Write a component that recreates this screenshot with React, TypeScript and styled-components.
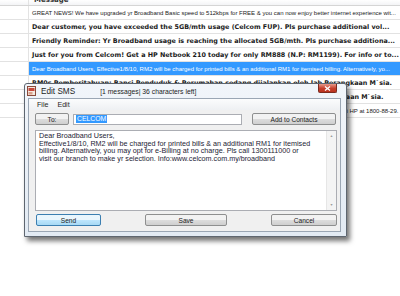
import React from "react";
import styled, { createGlobalStyle } from "styled-components";

const Global = createGlobalStyle`
  html, body {
    margin: 0;
    padding: 0;
    background: #ffffff;
    overflow: hidden;
  }
`;

type Msg = { text: string; bold?: boolean; selected?: boolean };

const messages: Msg[] = [
  {
    text: "GREAT NEWS! We have upgraded yr Broadband Basic speed to 512kbps for FREE & you can now enjoy better internet experience wit...",
  },
  {
    text: "Dear customer, you have exceeded the 5GB/mth usage (Celcom FUP). Pls purchase additional vol...",
    bold: true,
  },
  {
    text: "Friendly Reminder: Yr Broadband usage is reaching the allocated 5GB/mth. Pls purchase additiona...",
    bold: true,
  },
  {
    text: "Just for you from Celcom! Get a HP Netbook 210 today for only RM888 (N.P: RM1199). For info or to...",
    bold: true,
  },
  {
    text: "Dear Broadband Users,  Effective1/8/10, RM2 will be charged for printed bills & an additional RM1 for itemised billing. Alternatively, yo...",
    selected: true,
  },
  {
    text: "RM0s Pemberitahuan: Banci Penduduk & Perumahan sedang dijalankan oleh Jab Perangkaan M`sia.",
    bold: true,
  },
  {
    text: "RM0s Pemberitahuan: Banci Penduduk & Perumahan 2010 dijalankan oleh Jab Perangkaan M`sia.",
    bold: true,
  },
  {
    text: "Celcom: Nikmati tawaran istimewa Broadband Basic & Netbook pada harga menarik sekarang. Untuk info, sila hubungi HP at 1800-88-29.",
  },
];

export default function App() {
  return (
    <>
      <Global />
      <Screen>
        <List>
          <Header>
            <HeadCell />
            <HeadLabel>Message</HeadLabel>
          </Header>
          {messages.map((m, i) => (
            <Row key={i}>
              <Lead />
              <Cell $bold={m.bold} $selected={m.selected}>
                {m.text}
              </Cell>
            </Row>
          ))}
        </List>

        <Dialog>
          <TitleBar>
            <AppIcon width="9" height="10" viewBox="0 0 9 10">
              <rect x="0.5" y="0.5" width="8" height="9" fill="#f4e9e0" stroke="#8a4a3a" />
              <rect x="1.5" y="2" width="6" height="3" fill="#c8473a" />
              <rect x="1.5" y="6" width="4" height="2.5" fill="#d9a08a" />
            </AppIcon>
            <Title>Edit SMS</Title>
            <Counter>[1 messages| 36 characters left]</Counter>
            <CloseButton>
              <svg width="7" height="5" viewBox="0 0 7 5">
                <path d="M1 0.5 L6 4.5 M6 0.5 L1 4.5" stroke="#fff" strokeWidth="1.3" />
              </svg>
            </CloseButton>
          </TitleBar>
          <Client>
            <MenuBar>
              <MenuItem>File</MenuItem>
              <MenuItem>Edit</MenuItem>
            </MenuBar>
            <Body>
              <ToolRow>
                <Button $w={34}>To:</Button>
                <Recipient>
                  <Picked>CELCOM</Picked>
                </Recipient>
                <Button $w={84}>Add to Contacts</Button>
              </ToolRow>
              <TextBox>
                <TextContent>
                  Dear Broadband Users,
                  <br />
                  Effective1/8/10, RM2 will be charged for printed bills &amp; an additional RM1 for itemised
                  <br />
                  billing. Alternatively, you may opt for e-Billing at no charge. Pls call 1300111000 or
                  <br />
                  visit our branch to make yr selection. Info:www.celcom.com.my/broadband
                </TextContent>
                <ScrollTrack>
                  <Arrow>▲</Arrow>
                  <Arrow>▼</Arrow>
                </ScrollTrack>
              </TextBox>
              <ActionRow>
                <Button $w={65} $focus>
                  Send
                </Button>
                <Button $w={82}>Save</Button>
                <Button $w={66}>Cancel</Button>
              </ActionRow>
            </Body>
          </Client>
        </Dialog>
      </Screen>
    </>
  );
}

const Screen = styled.div`
  position: relative;
  width: 400px;
  height: 296px;
  overflow: hidden;
  background: #ffffff;
`;

const List = styled.div`
  display: flex;
  flex-direction: column;
`;

const Header = styled.div`
  display: flex;
  height: 5px;
  overflow: hidden;
  background: linear-gradient(#ffffff, #f3f4f6);
  border-bottom: 1px solid #d5d5d5;
`;

const HeadCell = styled.div`
  width: 28px;
  flex: none;
  border-right: 1px solid #e3e3e3;
`;

const HeadLabel = styled.div`
  margin-top: -4px;
  padding-left: 5px;
  font: bold 7px/8px "DejaVu Sans", sans-serif;
  color: #333;
`;

const Row = styled.div`
  display: flex;
  height: 13px;
  border-bottom: 1px solid #e2e2e2;
`;

const Lead = styled.div`
  width: 28px;
  flex: none;
`;

const Cell = styled.div<{ $bold?: boolean; $selected?: boolean }>`
  flex: 1;
  min-width: 0;
  display: flex;
  align-items: center;
  padding-left: 3px;
  white-space: nowrap;
  overflow: hidden;
  border-left: 1px solid #e3e3e3;
  font-family: ${(p) => (p.$bold ? '"DejaVu Sans"' : '"Liberation Sans"')}, sans-serif;
  font-size: ${(p) => (p.$bold ? "6.4px" : "6px")};
  font-weight: ${(p) => (p.$bold ? 700 : 400)};
  color: ${(p) => (p.$selected ? "#ffffff" : "#1a1a1a")};
  background: ${(p) => (p.$selected ? "#3399ff" : "transparent")};
`;

const Dialog = styled.div`
  position: absolute;
  left: 24px;
  top: 83px;
  width: 323px;
  height: 154px;
  box-sizing: border-box;
  display: flex;
  flex-direction: column;
  background: linear-gradient(#f1f5fa, #e2eaf3);
  border: 1px solid #5e6670;
  border-radius: 3px 3px 0 0;
  box-shadow: 3px 4px 5px rgba(0, 0, 0, 0.55);
  font-family: "Liberation Sans", sans-serif;
  color: #1e1e1e;
`;

const TitleBar = styled.div`
  position: relative;
  height: 14px;
  flex: none;
  display: flex;
  align-items: center;
  padding-left: 2px;
`;

const AppIcon = styled.svg`
  flex: none;
`;

const Title = styled.span`
  margin-left: 5px;
  font-size: 8.2px;
`;

const Counter = styled.span`
  margin-left: 25px;
  font-size: 6.8px;
`;

const CloseButton = styled.div`
  position: absolute;
  right: 9px;
  top: 0;
  width: 17px;
  height: 8px;
  display: flex;
  align-items: center;
  justify-content: center;
  background: linear-gradient(#e89a8a, #c7402c 55%, #b8321f);
  border: 1px solid #7a2a1e;
  border-top: none;
  border-radius: 0 0 2px 2px;
`;

const Client = styled.div`
  flex: 1;
  display: flex;
  flex-direction: column;
  margin: 0 5px 4px 3px;
  background: #f0f0f0;
  border: 1px solid #9aa6b4;
`;

const MenuBar = styled.div`
  height: 11px;
  flex: none;
  display: flex;
  align-items: center;
  gap: 9px;
  padding-left: 8px;
  background: linear-gradient(#fbfcfd, #eef0f3);
`;

const MenuItem = styled.span`
  font-size: 7.1px;
`;

const Body = styled.div`
  flex: 1;
  display: flex;
  flex-direction: column;
  padding: 3px 4px 0 6px;
`;

const ToolRow = styled.div`
  display: flex;
  align-items: center;
  height: 12px;
`;

const Button = styled.div<{ $w: number; $focus?: boolean }>`
  width: ${(p) => p.$w}px;
  height: 12px;
  box-sizing: border-box;
  flex: none;
  display: flex;
  align-items: center;
  justify-content: center;
  font-size: 6.6px;
  color: #222;
  border-radius: 2px;
  border: 1px solid ${(p) => (p.$focus ? "#3c7fb1" : "#8e8f8f")};
  background: ${(p) =>
    p.$focus
      ? "linear-gradient(#eaf6fd 50%, #bee6fd 50%, #a7d9f5)"
      : "linear-gradient(#f2f2f2 50%, #dddddd 50%, #cfcfcf)"};
`;

const Recipient = styled.div`
  width: 170px;
  height: 11px;
  box-sizing: border-box;
  margin: 0 10px 0 4px;
  display: flex;
  align-items: center;
  padding-left: 2px;
  background: #ffffff;
  border: 1px solid #abadb3;
`;

const Picked = styled.span`
  font-size: 6.8px;
  color: #ffffff;
  background: #3399ff;
  padding: 0 1px;
  line-height: 8px;
`;

const TextBox = styled.div`
  margin-top: 5px;
  width: 302px;
  height: 81px;
  box-sizing: border-box;
  display: flex;
  background: #ffffff;
  border: 1px solid #abadb3;
`;

const TextContent = styled.div`
  flex: 1;
  padding: 1px 0 0 3px;
  font-size: 7.2px;
  line-height: 7.6px;
  color: #1d2335;
  white-space: nowrap;
  overflow: hidden;
`;

const ScrollTrack = styled.div`
  width: 9px;
  flex: none;
  display: flex;
  flex-direction: column;
  justify-content: space-between;
  align-items: center;
  padding: 3px 0;
  background: #f4f4f4;
  border-left: 1px solid #e6e6e6;
`;

const Arrow = styled.span`
  font-size: 3.5px;
  color: #9a9a9a;
  line-height: 4px;
`;

const ActionRow = styled.div`
  display: flex;
  justify-content: space-between;
  align-items: center;
  margin-top: 3px;
  padding: 0 0 0 1px;
  width: 302px;
  box-sizing: border-box;
`;
